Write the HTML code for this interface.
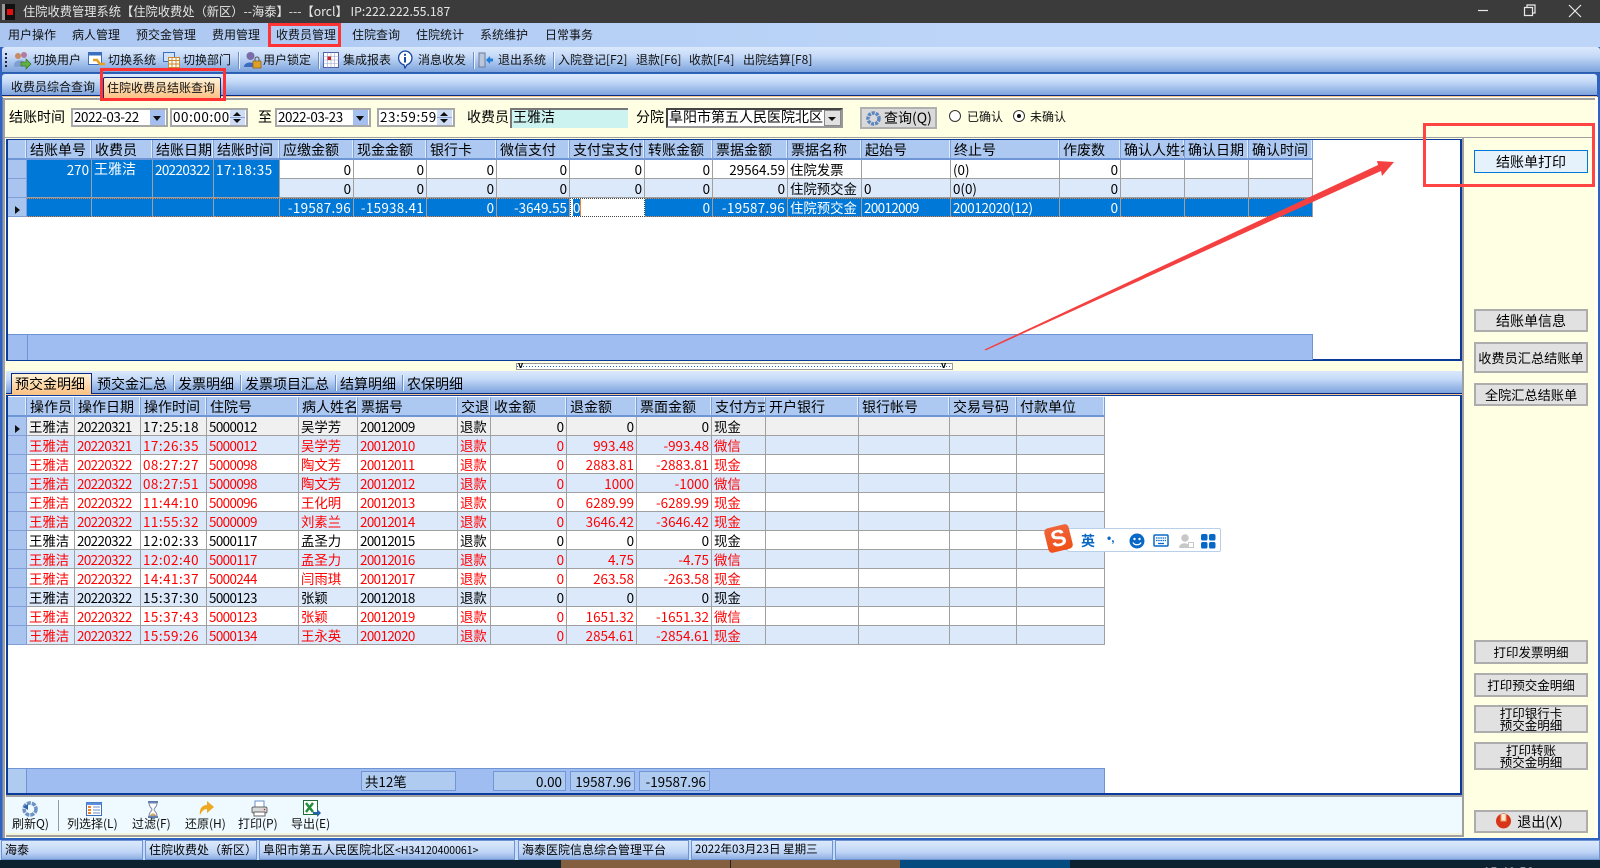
<!DOCTYPE html>
<html lang="zh"><head><meta charset="utf-8"><title>住院收费管理系统</title>
<style>
html,body{margin:0;padding:0;width:1600px;height:868px;overflow:hidden;background:#2f62c0;}
body{position:relative;font-family:"WenQuanYi Zen Hei","Noto Sans CJK SC",sans-serif;font-size:13.4px;color:#000;}
.a{position:absolute;box-sizing:border-box;}
.t{position:absolute;white-space:nowrap;line-height:16px;}
.m{font-size:12px;color:#111;}
.h{font-size:14px;}
.g{position:absolute;border-collapse:separate;border-spacing:0;table-layout:fixed;font-size:13.4px;}
.g td,.g th{box-sizing:border-box;height:19px;padding:0 2px;overflow:hidden;white-space:nowrap;border-right:1px solid #a0a0a0;border-bottom:1px solid #a0a0a0;font-weight:normal;line-height:17px;text-align:left;}
.g th{height:20px;font-size:14px;line-height:15px;background:#adc9f1;border-right:1px solid #7d9fd8;border-bottom:2px solid #6f97d8;box-shadow:inset -1px 0 #dfeafb;padding:2px 2px 0 3px;}
.g td.i{background:#a9c5ef;border-right:1px solid #7f9fd6;border-bottom:1px solid #7f9fd6;padding:0;}
.g td.r{text-align:right;}
.bt td:nth-child(3),.bt td:nth-child(5),.bt td:nth-child(7){letter-spacing:-.6px;}
.bt td:nth-child(4){letter-spacing:.5px;}
.s{background:#0078d7;color:#fff;}
.mg{vertical-align:top;padding-top:1px !important;background:#0078d7;}
.b td{background:#dce9fb;}
.w td{background:#fff;}
.z td{background:#f0f0f0;}
.red td{color:#f00;}
.o td:not(.i){background:#0078d7;color:#fff;border-top:1px dotted #f08030;border-bottom:1px dotted #f08030;}
.btn{position:absolute;left:1474px;width:114px;background:#e1e1e1;border:2px solid #adadad;text-align:center;font-size:13.2px;display:flex;align-items:center;justify-content:center;line-height:12px;box-sizing:border-box;}
.bar{background:linear-gradient(#dbe9fc,#c6dbf8 35%,#7da3dd);}
.box{position:absolute;background:#fff;border:2px solid #a8a8a8;box-sizing:border-box;height:19px;line-height:13px;padding-left:1px;font-size:13.4px;}
.dt{letter-spacing:-.4px;}
.tm{letter-spacing:.6px;}
.dd{position:absolute;right:1px;top:0;bottom:0;width:15px;background:#a5c0f0;}
.dd:after{content:"";position:absolute;left:3px;top:6px;border:4px solid transparent;border-top:5px solid #111;}
.sp{position:absolute;right:1px;top:0;bottom:0;width:15px;background:linear-gradient(#cfdcf5 0 46%,#8aa6d8 46% 54%,#cfdcf5 54%);}
.sp:before{content:"";position:absolute;left:3px;top:2px;border-left:4px solid transparent;border-right:4px solid transparent;border-bottom:4px solid #111;}
.sp:after{content:"";position:absolute;left:3px;bottom:2px;border-left:4px solid transparent;border-right:4px solid transparent;border-top:4px solid #111;}
.sb{position:absolute;top:840px;height:20px;background:linear-gradient(#dce9fc,#c0d6f6 60%,#8fb0e4);border:1px solid #6f94d3;box-sizing:border-box;font-size:12px;line-height:17px;padding-left:3px;white-space:nowrap;overflow:hidden;}
.fc{position:absolute;top:771px;height:20px;background:#afcbf0;border:1px solid #7295d8;box-sizing:border-box;line-height:18px;font-size:13.4px;padding:0 3px;}
.sep{position:absolute;width:1px;background:#6e8fc6;box-shadow:1px 0 #eef4fd;}
.rd{position:absolute;width:12px;height:12px;border:1px solid #333;border-radius:50%;background:#fff;box-sizing:border-box;}
</style></head><body>

<!-- title -->
<div class="a" style="left:0;top:0;width:1600px;height:23px;background:#3b3b3b"></div>
<div class="a" style="left:2px;top:4px;width:13px;height:16px;background:#111;border-left:3px solid #999"></div>
<div class="a" style="left:7px;top:9px;width:6px;height:6px;background:#e01010"></div>
<div class="t" style="left:23px;top:3px;color:#e6e6e6;font-size:12.25px">住院收费管理系统【住院收费处（新区）--海泰】---【orcl】 IP:222.222.55.187</div>
<svg class="a" style="left:1470px;top:0" width="130" height="24" fill="none" stroke="#e8e8e8" stroke-width="1.2"><path d="M8 10.500h10"/><path d="M54.500 7.500h8v8h-8zM57 7.500v-2.500h8v8h-2.500"/><path d="M99 5l12 12M111 5l-12 12"/></svg>

<!-- menu -->
<div class="a" style="left:0;top:23px;width:1600px;height:24px;background:linear-gradient(90deg,#abc6f1,#bcd5f8 60%,#bcd5f8)"></div>
<div class="t m" style="left:8px;top:27px">用户操作</div>
<div class="t m" style="left:72px;top:27px">病人管理</div>
<div class="t m" style="left:136px;top:27px">预交金管理</div>
<div class="t m" style="left:212px;top:27px">费用管理</div>
<div class="t m" style="left:276px;top:27px">收费员管理</div>
<div class="t m" style="left:352px;top:27px">住院查询</div>
<div class="t m" style="left:416px;top:27px">住院统计</div>
<div class="t m" style="left:480px;top:27px">系统维护</div>
<div class="t m" style="left:545px;top:27px">日常事务</div>

<!-- toolbar -->
<div class="a bar" style="left:2px;top:47px;width:1598px;height:26px;border-bottom:1px solid #2a5ea8;border-radius:3px 3px 0 0"></div>
<div class="a" style="left:5px;top:53px;width:2px;height:14px;background:repeating-linear-gradient(#223 0 2px,transparent 2px 4px)"></div>
<svg class="a" style="left:12px;top:50px" width="20" height="20"><circle cx="6" cy="6" r="3" fill="#c98a60"/><circle cx="12" cy="5" r="3" fill="#b47aa0"/><path d="M2 15c0-5 8-6 11-3v5H2z" fill="#7f9fd0"/><path d="M9 12h5v-3l5 5-5 5v-3H9z" fill="#62b040" stroke="#2c6a20" stroke-width=".6"/></svg>
<div class="t m" style="left:33px;top:52px">切换用户</div>
<svg class="a" style="left:88px;top:52px" width="18" height="17"><rect x=".5" y=".5" width="13" height="12" fill="#fff" stroke="#3a6fc0"/><rect x=".5" y=".5" width="13" height="3" fill="#3a6fc0"/><path d="M5 8h4l3 4h5" fill="none" stroke="#e8a020" stroke-width="2.500"/></svg>
<div class="t m" style="left:108px;top:52px">切换系统</div>
<svg class="a" style="left:163px;top:51px" width="18" height="18"><rect x=".5" y="1.500" width="11" height="9" fill="#cfe0f8" stroke="#3a6fc0"/><rect x="5.500" y="6.500" width="11" height="10" fill="#fff" stroke="#c98a30"/><path d="M5.500 9.500h11M9 7v9M13 7v9M5.500 13h11" stroke="#c98a30"/></svg>
<div class="t m" style="left:183px;top:52px">切换部门</div>
<div class="sep" style="left:238px;top:52px;height:17px"></div>
<svg class="a" style="left:244px;top:51px" width="18" height="19"><circle cx="6.500" cy="5" r="4" fill="#7a6ca8"/><path d="M0 16c0-6 12-6 12 0z" fill="#3c6cc0"/><rect x="9" y="10" width="8" height="7" fill="#e0a028" stroke="#8a5a10" stroke-width=".7"/><path d="M11 10V8a2 2 0 0 1 4 0v2" fill="none" stroke="#555"/></svg>
<div class="t m" style="left:263px;top:52px">用户锁定</div>
<div class="sep" style="left:318px;top:52px;height:17px"></div>
<svg class="a" style="left:323px;top:52px" width="16" height="16"><rect x=".5" y=".5" width="15" height="15" fill="#fff" stroke="#5060a8"/><path d="M.5 4.500h15M.5 8h15M.5 11.500h15M4.500 .5v15M8 .5v15M11.500 .5v15" stroke="#99a4d0" stroke-width=".6"/><rect x="4.500" y="4.500" width="3.500" height="3.500" fill="#d02020"/></svg>
<div class="t m" style="left:343px;top:52px">集成报表</div>
<svg class="a" style="left:397px;top:50px" width="16" height="19"><path d="M8 1a7 7 0 0 1 2 13.700L8 18l-1-3.200A7 7 0 0 1 8 1z" fill="#fff" stroke="#1a4aa0" stroke-width="1.300"/><rect x="7" y="7" width="2" height="5.500" fill="#1a4aa0"/><rect x="7" y="3.800" width="2" height="2" fill="#1a4aa0"/></svg>
<div class="t m" style="left:418px;top:52px">消息收发</div>
<div class="sep" style="left:473px;top:52px;height:17px"></div>
<svg class="a" style="left:478px;top:52px" width="16" height="16"><path d="M1 1h6v14H1z" fill="#b9c6dc" stroke="#6a7a9a"/><path d="M8 8l4-4v2.500h3v3h-3V12z" fill="#2080d8"/></svg>
<div class="t m" style="left:498px;top:52px">退出系统</div>
<div class="sep" style="left:553px;top:52px;height:17px"></div>
<div class="t m" style="left:558px;top:52px">入院登记[F2]</div>
<div class="t m" style="left:636px;top:52px">退款[F6]</div>
<div class="t m" style="left:689px;top:52px">收款[F4]</div>
<div class="t m" style="left:743px;top:52px">出院结算[F8]</div>

<!-- tabstrip 1 -->
<div class="a bar" style="left:2px;top:74px;width:1595px;height:21px;border-radius:3px 3px 0 0"></div>
<div class="a" style="left:2px;top:95px;width:1595px;height:1px;background:#0a2a80"></div>
<div class="a" style="left:2px;top:96px;width:1595px;height:1px;background:#f6c890"></div>
<div class="a" style="left:2px;top:97px;width:1596px;height:743px;background:#fff;border-left:1px solid #5a80c8"></div>
<div class="t m" style="left:11px;top:79px">收费员综合查询</div>
<div class="a" style="left:103px;top:77px;width:118px;height:21px;background:linear-gradient(#fff3d8,#fbc285);border:1px solid #0a2a80;border-bottom:none;border-radius:2px 2px 0 0"></div>
<div class="t m" style="left:107px;top:80px">住院收费员结账查询</div>

<!-- filter panel -->
<div class="a" style="left:3px;top:98px;width:1592px;height:40px;background:#ffffe3;border-top:2px solid #a0a0a0;border-left:2px solid #a0a0a0;border-bottom:1px solid #a0a0a0"></div>
<div class="t h" style="left:9px;top:109px">结账时间</div>
<div class="box dt" style="left:71px;top:108px;width:97px;">2022-03-22<span class="dd"></span></div>
<div class="box tm" style="left:170px;top:108px;width:78px;">00:00:00<span class="sp"></span></div>
<div class="t h" style="left:258px;top:109px">至</div>
<div class="box dt" style="left:275px;top:108px;width:96px;">2022-03-23<span class="dd"></span></div>
<div class="box tm" style="left:377px;top:108px;width:78px;">23:59:59<span class="sp"></span></div>
<div class="t h" style="left:467px;top:109px">收费员</div>
<div class="a" style="left:510px;top:108px;width:118px;height:20px;background:#cdf3f0;border-top:2px solid #777;border-left:2px solid #777;line-height:15px;padding-left:1px;font-size:14px">王雅洁</div>
<div class="t h" style="left:636px;top:109px">分院</div>
<div class="a" style="left:666px;top:108px;width:177px;height:20px;background:#fff;border:2px inset #999;line-height:15px;padding-left:1px;white-space:nowrap;overflow:hidden;font-size:14px">阜阳市第五人民医院北区<span class="a" style="right:0;top:0;width:17px;height:16px;background:#e1e1e1;border:1px solid #888"></span><span class="a" style="right:5px;top:7px;border:4px solid transparent;border-top:4px solid #111"></span></div>
<div class="a" style="left:860px;top:107px;width:77px;height:22px;background:#d9d9d9;border:2px solid #b0b0b0"></div>
<svg class="a" style="left:865px;top:110px" width="17" height="17"><circle cx="8.500" cy="8.500" r="5.500" fill="none" stroke="#5c86c0" stroke-width="3.500" stroke-dasharray="3 1"/></svg>
<div class="t h" style="left:884px;top:110px">查询(Q)</div>
<div class="rd" style="left:949px;top:110px"></div>
<div class="t m" style="left:967px;top:109px">已确认</div>
<div class="rd" style="left:1013px;top:110px"></div>
<div class="a" style="left:1017px;top:114px;width:4px;height:4px;background:#111;border-radius:50%"></div>
<div class="t m" style="left:1030px;top:109px">未确认</div>

<!-- main left frame bg -->
<div class="a" style="left:3px;top:138px;width:1592px;height:700px;background:#ffffe3"></div>
<div class="a" style="left:3px;top:138px;width:2px;height:700px;background:#a0a0a0"></div>

<!-- top grid -->
<div class="a" style="left:6px;top:139px;width:1456px;height:222px;background:#fff;border:2px solid #0a3a9a;border-top:1px solid #0a3a9a"></div>
<table class="g" style="left:8px;top:140px;width:1305px">
<colgroup><col style="width:19px"><col style="width:65px"><col style="width:61px"><col style="width:61px"><col style="width:66px"><col style="width:74px"><col style="width:73px"><col style="width:70px"><col style="width:73px"><col style="width:75px"><col style="width:68px"><col style="width:75px"><col style="width:74px"><col style="width:89px"><col style="width:109px"><col style="width:61px"><col style="width:64px"><col style="width:64px"><col style="width:64px"></colgroup>
<tr><th></th><th>结账单号</th><th>收费员</th><th>结账日期</th><th>结账时间</th><th>应缴金额</th><th>现金金额</th><th>银行卡</th><th>微信支付</th><th>支付宝支付</th><th>转账金额</th><th>票据金额</th><th>票据名称</th><th>起始号</th><th>终止号</th><th>作废数</th><th>确认人姓名</th><th>确认日期</th><th>确认时间</th></tr>
<tr class="w"><td class="i"></td><td class="r s mg" rowspan="2" style="background:#0078d7">270</td><td class="s mg" rowspan="2" style="background:#0078d7;font-size:14px">王雅洁</td><td class="s mg" rowspan="2" style="background:#0078d7;letter-spacing:-.6px">20220322</td><td class="s mg" rowspan="2" style="background:#0078d7;letter-spacing:.6px">17:18:35</td><td class="r">0</td><td class="r">0</td><td class="r">0</td><td class="r">0</td><td class="r">0</td><td class="r">0</td><td class="r">29564.59</td><td>住院发票</td><td></td><td>(0)</td><td class="r">0</td><td></td><td></td><td></td></tr>
<tr class="b"><td class="i"></td><td class="r">0</td><td class="r">0</td><td class="r">0</td><td class="r">0</td><td class="r">0</td><td class="r">0</td><td class="r">0</td><td>住院预交金</td><td>0</td><td>0(0)</td><td class="r">0</td><td></td><td></td><td></td></tr>
<tr class="o"><td class="i"><span style="display:block;margin:5px 0 0 7px;width:0;height:0;border:4px solid transparent;border-left:5px solid #111"></span></td><td></td><td></td><td></td><td></td><td class="r" style="letter-spacing:.3px">-19587.96</td><td class="r" style="letter-spacing:.3px">-15938.41</td><td class="r">0</td><td class="r">-3649.55</td><td style="background:#fff;color:#000;border:1px dotted #444;padding:0 2px"><span style="background:#0078d7;color:#fff;border-right:1px solid #f08030">0</span></td><td class="r">0</td><td class="r" style="letter-spacing:.3px">-19587.96</td><td>住院预交金</td><td style="letter-spacing:-.6px">20012009</td><td style="letter-spacing:-.3px">20012020(12)</td><td class="r">0</td><td></td><td></td><td></td></tr>
</table>
<div class="a" style="left:8px;top:334px;width:1305px;height:26px;background:#9fbdf0;border-top:1px solid #6f94d3;border-right:1px solid #6f94d3"></div>
<div class="a" style="left:27px;top:334px;width:1px;height:26px;background:#6f94d3"></div>

<!-- splitter -->
<div class="a" style="left:516px;top:363px;width:437px;height:7px;border:1px solid #999;background:#fff repeating-linear-gradient(90deg,#1a6ac0 0 1px,#fff 1px 3px) center/100% 1px no-repeat"></div>
<div class="t" style="left:518px;top:360px;font-size:9px;line-height:10px;font-weight:bold">v</div>
<div class="t" style="left:941px;top:360px;font-size:9px;line-height:10px;font-weight:bold">v</div>

<!-- tabstrip 2 -->
<div class="a bar" style="left:6px;top:371px;width:1456px;height:22px"></div>
<div class="a" style="left:6px;top:393px;width:1456px;height:1px;background:#0a2a80"></div>
<div class="a" style="left:6px;top:394px;width:1456px;height:1px;background:#f6c890"></div>
<div class="a" style="left:11px;top:373px;width:81px;height:21px;background:linear-gradient(#fff3d8,#fbc285);border:1px solid #0a2a80;border-bottom:none"></div>
<div class="t h" style="left:15px;top:376px">预交金明细</div>
<div class="t h" style="left:97px;top:376px">预交金汇总</div>
<div class="sep" style="left:173px;top:375px;height:16px"></div>
<div class="t h" style="left:178px;top:376px">发票明细</div>
<div class="sep" style="left:240px;top:375px;height:16px"></div>
<div class="t h" style="left:245px;top:376px">发票项目汇总</div>
<div class="sep" style="left:335px;top:375px;height:16px"></div>
<div class="t h" style="left:340px;top:376px">结算明细</div>
<div class="sep" style="left:402px;top:375px;height:16px"></div>
<div class="t h" style="left:407px;top:376px">农保明细</div>

<!-- bottom grid -->
<div class="a" style="left:6px;top:395px;width:1456px;height:400px;background:#fff;border:2px solid #0a3a9a;border-top:1px solid #0a3a9a"></div>
<table class="g bt" style="left:8px;top:397px;width:1097px">
<colgroup><col style="width:19px"><col style="width:48px"><col style="width:66px"><col style="width:66px"><col style="width:92px"><col style="width:59px"><col style="width:100px"><col style="width:33px"><col style="width:76px"><col style="width:70px"><col style="width:75px"><col style="width:54px"><col style="width:93px"><col style="width:91px"><col style="width:67px"><col style="width:88px"></colgroup>
<tr><th></th><th>操作员</th><th>操作日期</th><th>操作时间</th><th>住院号</th><th>病人姓名</th><th>票据号</th><th>交退</th><th>收金额</th><th>退金额</th><th>票面金额</th><th>支付方式</th><th>开户银行</th><th>银行帐号</th><th>交易号码</th><th>付款单位</th></tr>
<tr class="z"><td class="i"><span style="display:block;margin:5px 0 0 7px;width:0;height:0;border:4px solid transparent;border-left:5px solid #111"></span></td><td>王雅洁</td><td>20220321</td><td>17:25:18</td><td>5000012</td><td>吴学芳</td><td>20012009</td><td>退款</td><td class="r">0</td><td class="r">0</td><td class="r">0</td><td>现金</td><td></td><td></td><td></td><td></td></tr>
<tr class="b red"><td class="i"></td><td>王雅洁</td><td>20220321</td><td>17:26:35</td><td>5000012</td><td>吴学芳</td><td>20012010</td><td>退款</td><td class="r">0</td><td class="r">993.48</td><td class="r">-993.48</td><td>微信</td><td></td><td></td><td></td><td></td></tr>
<tr class="w red"><td class="i"></td><td>王雅洁</td><td>20220322</td><td>08:27:27</td><td>5000098</td><td>陶文芳</td><td>20012011</td><td>退款</td><td class="r">0</td><td class="r">2883.81</td><td class="r">-2883.81</td><td>现金</td><td></td><td></td><td></td><td></td></tr>
<tr class="b red"><td class="i"></td><td>王雅洁</td><td>20220322</td><td>08:27:51</td><td>5000098</td><td>陶文芳</td><td>20012012</td><td>退款</td><td class="r">0</td><td class="r">1000</td><td class="r">-1000</td><td>微信</td><td></td><td></td><td></td><td></td></tr>
<tr class="w red"><td class="i"></td><td>王雅洁</td><td>20220322</td><td>11:44:10</td><td>5000096</td><td>王化明</td><td>20012013</td><td>退款</td><td class="r">0</td><td class="r">6289.99</td><td class="r">-6289.99</td><td>现金</td><td></td><td></td><td></td><td></td></tr>
<tr class="b red"><td class="i"></td><td>王雅洁</td><td>20220322</td><td>11:55:32</td><td>5000009</td><td>刘素兰</td><td>20012014</td><td>退款</td><td class="r">0</td><td class="r">3646.42</td><td class="r">-3646.42</td><td>现金</td><td></td><td></td><td></td><td></td></tr>
<tr class="w"><td class="i"></td><td>王雅洁</td><td>20220322</td><td>12:02:33</td><td>5000117</td><td>孟圣力</td><td>20012015</td><td>退款</td><td class="r">0</td><td class="r">0</td><td class="r">0</td><td>现金</td><td></td><td></td><td></td><td></td></tr>
<tr class="b red"><td class="i"></td><td>王雅洁</td><td>20220322</td><td>12:02:40</td><td>5000117</td><td>孟圣力</td><td>20012016</td><td>退款</td><td class="r">0</td><td class="r">4.75</td><td class="r">-4.75</td><td>微信</td><td></td><td></td><td></td><td></td></tr>
<tr class="w red"><td class="i"></td><td>王雅洁</td><td>20220322</td><td>14:41:37</td><td>5000244</td><td>闫雨琪</td><td>20012017</td><td>退款</td><td class="r">0</td><td class="r">263.58</td><td class="r">-263.58</td><td>现金</td><td></td><td></td><td></td><td></td></tr>
<tr class="b"><td class="i"></td><td>王雅洁</td><td>20220322</td><td>15:37:30</td><td>5000123</td><td>张颖</td><td>20012018</td><td>退款</td><td class="r">0</td><td class="r">0</td><td class="r">0</td><td>现金</td><td></td><td></td><td></td><td></td></tr>
<tr class="w red"><td class="i"></td><td>王雅洁</td><td>20220322</td><td>15:37:43</td><td>5000123</td><td>张颖</td><td>20012019</td><td>退款</td><td class="r">0</td><td class="r">1651.32</td><td class="r">-1651.32</td><td>微信</td><td></td><td></td><td></td><td></td></tr>
<tr class="b red"><td class="i"></td><td>王雅洁</td><td>20220322</td><td>15:59:26</td><td>5000134</td><td>王永英</td><td>20012020</td><td>退款</td><td class="r">0</td><td class="r">2854.61</td><td class="r">-2854.61</td><td>现金</td><td></td><td></td><td></td><td></td></tr>
</table>
<div class="a" style="left:8px;top:768px;width:1097px;height:25px;background:#9fbdf0;border-top:1px solid #6f94d3;border-right:1px solid #6f94d3"></div>
<div class="a" style="left:8px;top:769px;width:19px;height:24px;background:#afcbf0;border-right:1px solid #6f94d3"></div>
<div class="fc" style="left:361px;width:95px">共12笔</div>
<div class="fc" style="left:493px;width:73px;text-align:right">0.00</div>
<div class="fc" style="left:570px;width:65px;text-align:right">19587.96</div>
<div class="fc" style="left:639px;width:71px;text-align:right">-19587.96</div>

<!-- bottom toolbar -->
<div class="a" style="left:6px;top:795px;width:1456px;height:41px;background:#eefaff;border-top:2px solid #a0a0a0;border-bottom:3px solid #f4f4dc"></div>
<svg class="a" style="left:21px;top:800px" width="18" height="18"><circle cx="9" cy="9" r="6" fill="none" stroke="#6f92c4" stroke-width="3.500" stroke-dasharray="4 1"/><path d="M2 7l5-3v6z" fill="#2c62a8"/></svg>
<div class="t m" style="left:12px;top:816px">刷新Q)</div>
<div class="sep" style="left:58px;top:800px;height:31px;background:#999;box-shadow:none"></div>
<svg class="a" style="left:86px;top:802px" width="16" height="14"><rect x=".5" y=".5" width="15" height="13" fill="#fff" stroke="#3a6fc0"/><rect x=".5" y=".5" width="15" height="2.500" fill="#5a8ed8"/><path d="M2 5h3M2 8h3M2 11h3" stroke="#f08020" stroke-width="2"/><path d="M7 5h7M7 8h7M7 11h7" stroke="#6a8fc8"/></svg>
<div class="t m" style="left:67px;top:816px">列选择(L)</div>
<svg class="a" style="left:147px;top:801px" width="12" height="17"><path d="M1 1h10M1 16h10" stroke="#5a7ab0" stroke-width="2"/><path d="M2 2h8c0 4-3 5-3 6.500S10 11 10 15H2c0-4 3-5 3-6.500S2 6 2 2z" fill="#fff" stroke="#7a8aa8"/><path d="M3 14.500c1-3 5-3 6 0z" fill="#e0b060"/></svg>
<div class="t m" style="left:132px;top:816px">过滤(F)</div>
<svg class="a" style="left:198px;top:800px" width="17" height="16"><path d="M2 15C1 8 5 5 9 5V1l7 6-7 6V9c-3 0-5 2-7 6z" fill="#f0a820"/></svg>
<div class="t m" style="left:185px;top:816px">还原(H)</div>
<svg class="a" style="left:251px;top:800px" width="17" height="17"><rect x="4" y="1" width="9" height="7" fill="#fff" stroke="#6a8fc8"/><rect x="1" y="7" width="15" height="6" rx="1.500" fill="#d8d8d8" stroke="#666"/><rect x="3" y="12" width="11" height="4" fill="#fff" stroke="#666"/><circle cx="13.500" cy="9.500" r=".8" fill="#d02020"/></svg>
<div class="t m" style="left:238px;top:816px">打印(P)</div>
<svg class="a" style="left:303px;top:800px" width="18" height="17"><rect x=".5" y=".5" width="14" height="14" fill="#fff" stroke="#1f6f3a"/><path d="M3 3l7 9M10 3l-7 9" stroke="#1f8f3a" stroke-width="2.500"/><path d="M10 12h4v-3l4 4-4 4v-3h-4z" fill="#2060b0"/></svg>
<div class="t m" style="left:291px;top:816px">导出(E)</div>

<!-- right panel -->
<div class="a" style="left:1462px;top:138px;width:2px;height:698px;background:#a0a0a0"></div>
<div class="a" style="left:6px;top:835px;width:1458px;height:2px;background:#a0a0a0"></div>
<div class="a" style="left:1596px;top:98px;width:1px;height:740px;background:#fff"></div>
<div class="btn" style="top:150px;height:23px;background:#e5f1fb;border:1px solid #0078d7;font-size:14px">结账单打印</div>
<div class="btn" style="top:309px;height:23px;font-size:14px">结账单信息</div>
<div class="btn" style="top:342px;height:31px">收费员汇总结账单</div>
<div class="btn" style="top:383px;height:23px">全院汇总结账单</div>
<div class="btn" style="top:640px;height:24px;font-size:12.500px">打印发票明细</div>
<div class="btn" style="top:673px;height:24px;font-size:12.500px">打印预交金明细</div>
<div class="btn" style="top:705px;height:28px;font-size:12.500px">打印银行卡<br>预交金明细</div>
<div class="btn" style="top:742px;height:28px;font-size:12.500px">打印转账<br>预交金明细</div>
<div class="btn" style="top:810px;height:23px;padding-left:18px;font-size:14px">退出(X)</div>
<svg class="a" style="left:1495px;top:812px" width="17" height="17"><circle cx="8.500" cy="9" r="7.500" fill="#d8361a"/><path d="M5.500 2h6v7.500h-6z" fill="#f0a060"/><path d="M6.500 2v6.500h4V2" fill="#fff" opacity=".75"/></svg>

<!-- status bar -->
<div class="a" style="left:0;top:838px;width:1600px;height:22px;background:#c8dcf8"></div>
<div class="a" style="left:0;top:838px;width:1600px;height:2px;background:#2f62c0"></div>
<div class="sb" style="left:1px;width:142px">海泰</div>
<div class="sb" style="left:145px;width:112px">住院收费处（新区）</div>
<div class="sb" style="left:259px;width:256px">阜阳市第五人民医院北区<span style="font-size:10.500px">&lt;H34120400061&gt;</span></div>
<div class="sb" style="left:518px;width:171px">海泰医院信息综合管理平台</div>
<div class="sb" style="left:691px;width:142px;font-size:11.500px">2022年03月23日 星期三</div>
<div class="sb" style="left:835px;width:765px"></div>

<!-- taskbar -->
<div class="a" style="left:0;top:860px;width:1600px;height:8px;background:#0c2230;overflow:hidden">
<div class="a" style="left:561px;top:0;width:339px;height:8px;background:#835f40"></div>
<div class="a" style="left:730px;top:0;width:1px;height:8px;background:#222"></div>
<div class="a" style="left:900px;top:0;width:170px;height:8px;background:#044b80"></div>
<div class="t" style="left:1483px;top:4px;color:#fff;font-size:13px">15:40:56</div>
</div>

<!-- annotations -->
<div class="a" style="left:268px;top:23px;width:73px;height:24px;border:3px solid #f33"></div>
<div class="a" style="left:100px;top:68px;width:126px;height:33px;border:3px solid #f33"></div>
<div class="a" style="left:1423px;top:123px;width:172px;height:64px;border:3px solid #f44"></div>
<svg class="a" style="left:970px;top:150px" width="440" height="210"><path d="M14.500 199.500L408 15 407 11 424 12 412 26 411 21 15.500 200.500z" fill="#f44040"/></svg>

<!-- IME -->
<div class="a" style="left:1067px;top:528px;width:154px;height:24px;background:#fff;border:1px solid #b9d0ea;border-radius:2px"></div>
<div class="a" style="left:1046px;top:526px;width:25px;height:25px;background:linear-gradient(#f0643a,#f05018);border-radius:4px;transform:rotate(-14deg);color:#fff;text-align:center;font:bold 23px/25px 'Liberation Sans',sans-serif">S</div>
<div class="t" style="left:1081px;top:533px;color:#0868c8;font-weight:bold;font-size:14px">英</div>
<div class="t" style="left:1107px;top:530px;color:#0868c8;font-weight:bold;font-size:12px;font-family:'Liberation Sans',sans-serif">&#8226;,</div>
<svg class="a" style="left:1129px;top:533px" width="90" height="16"><circle cx="8" cy="8" r="7.500" fill="#0868c8"/><circle cx="5.500" cy="6" r="1.200" fill="#fff"/><circle cx="10.500" cy="6" r="1.200" fill="#fff"/><path d="M4 9.500c1.500 3 6.500 3 8 0" fill="none" stroke="#fff" stroke-width="1.300"/><rect x="25" y="2" width="14" height="11" rx="1" fill="none" stroke="#0868c8" stroke-width="1.500"/><path d="M27 5h10M27 7.500h10" stroke="#0868c8" stroke-width="1.300" stroke-dasharray="1.500 .7"/><path d="M29 10.500h6" stroke="#0868c8" stroke-width="1.300"/><circle cx="56" cy="5" r="3.800" fill="#c8c8c8"/><path d="M50 15c0-6 9-6 10-2v2z" fill="#c8c8c8"/><rect x="59.500" y="9.500" width="5" height="5" fill="#fff" stroke="#c8c8c8"/><rect x="72" y="1" width="6.500" height="6.500" rx="1.800" fill="#0868c8"/><rect x="80" y="1" width="6.500" height="6.500" rx="1.800" fill="#0868c8"/><rect x="72" y="9" width="6.500" height="6.500" rx="1.800" fill="#0868c8"/><rect x="80" y="9" width="6.500" height="6.500" rx="1.800" fill="#0868c8"/></svg>
</body></html>
